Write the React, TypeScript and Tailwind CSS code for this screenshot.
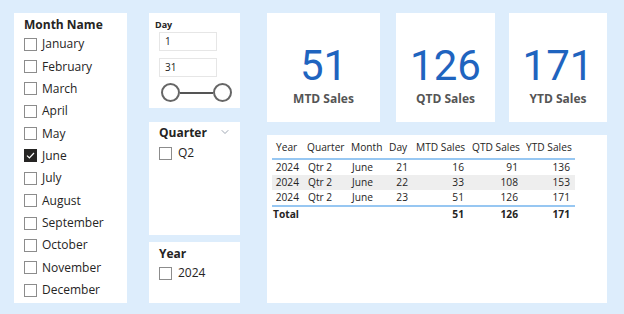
import React from 'react';
import { ChevronDown } from 'lucide-react';

const months = [
    'January', 'February', 'March', 'April', 'May', 'June',
    'July', 'August', 'September', 'October', 'November', 'December',
];

const rows = [
    { year: 2024, quarter: 'Qtr 2', month: 'June', day: 21, mtd: 16, qtd: 91, ytd: 136 },
    { year: 2024, quarter: 'Qtr 2', month: 'June', day: 22, mtd: 33, qtd: 108, ytd: 153 },
    { year: 2024, quarter: 'Qtr 2', month: 'June', day: 23, mtd: 51, qtd: 126, ytd: 171 },
];

const cols = 'grid grid-cols-[31px_44px_39px_26px_56px_54px_53px]';

function Box({ checked = false }: { checked?: boolean }) {
    if (checked) {
        return (
            <span className="flex h-[13px] w-[13px] shrink-0 items-center justify-center bg-[#252423]">
                <svg width="9" height="7" viewBox="0 0 9 7" fill="none">
                    <path d="M1 3.6 3.4 6 8 1" stroke="#fff" strokeWidth="1.2" />
                </svg>
            </span>
        );
    }
    return <span className="h-[13px] w-[13px] shrink-0 border border-[#8c8c8c] bg-white" />;
}

function Card({ value, label, width }: { value: number; label: string; width: string }) {
    return (
        <div className={`${width} flex h-full flex-col items-center bg-white pt-[29px]`}>
            <div className="font-['Roboto',sans-serif] text-[42px] leading-[48px] text-[#1f64bf]">{value}</div>
            <div className="mt-[1px] text-[12px] font-bold leading-[16px] text-[#555555]">{label}</div>
        </div>
    );
}

export default function App() {
    return (
        <div className="flex h-[314px] w-[624px] bg-[#ddedfc] pl-[14px] pt-[13px] font-['Open_Sans',sans-serif] text-[#252423]">
            {/* month slicer */}
            <div className="flex h-[290px] w-[113px] flex-col bg-white pl-[10px] pt-[4px]">
                <div className="text-[12px] font-bold leading-[16px]">Month Name</div>
                <div className="flex flex-col">
                    {months.map((m) => (
                        <div key={m} className="flex h-[22.36px] items-center gap-[5px] text-[12px]">
                            <Box checked={m === 'June'} />
                            <span>{m}</span>
                        </div>
                    ))}
                </div>
            </div>

            {/* middle slicers */}
            <div className="ml-[22px] flex w-[91px] flex-col">
                <div className="flex h-[95px] flex-col bg-white pl-[6px] pt-[6px]">
                    <div className="text-[9px] font-bold leading-[12px]">Day</div>
                    <div className="ml-[4px] mt-[1px] flex h-[19px] w-[58px] items-center border border-[#e6e6e6] pl-[5px] text-[10px]">1</div>
                    <div className="ml-[4px] mt-[7px] flex h-[19px] w-[58px] items-center border border-[#e6e6e6] pl-[5px] text-[10px]">31</div>
                    <div className="ml-[6px] mt-[6px] flex items-center">
                        <span className="h-[19px] w-[19px] rounded-full border-2 border-[#666666] bg-white" />
                        <span className="h-[2px] w-[33px] bg-[#555555]" />
                        <span className="h-[19px] w-[19px] rounded-full border-2 border-[#666666] bg-white" />
                    </div>
                </div>

                <div className="relative mt-[14px] flex h-[113px] flex-col bg-white pl-[10px] pt-[3px]">
                    <div className="text-[12px] font-bold leading-[16px]">Quarter</div>
                    <ChevronDown className="absolute right-[9px] top-[4px] text-[#7f8a99]" size={12} strokeWidth={1.5} />
                    <div className="mt-[3px] flex items-center gap-[6px] text-[12px]">
                        <Box />
                        <span>Q2</span>
                    </div>
                </div>

                <div className="mt-[7px] flex h-[61px] flex-col bg-white pl-[10px] pt-[4px]">
                    <div className="text-[12px] font-bold leading-[16px]">Year</div>
                    <div className="mt-[2px] flex items-center gap-[6px] text-[12px]">
                        <Box />
                        <span>2024</span>
                    </div>
                </div>
            </div>

            {/* cards and table */}
            <div className="ml-[27px] flex w-[340px] flex-col">
                <div className="flex h-[109px]">
                    <Card value={51} label="MTD Sales" width="w-[113px]" />
                    <div className="ml-[16px] flex h-full">
                        <Card value={126} label="QTD Sales" width="w-[99px]" />
                    </div>
                    <div className="ml-[14px] flex h-full">
                        <Card value={171} label="YTD Sales" width="w-[98px]" />
                    </div>
                </div>

                <div className="mt-[13px] h-[168px] bg-white pl-[5px] pt-[2px] text-[10.2px] text-[#252423]">
                    <div className="w-[303px]">
                        <div className={`${cols} h-[23px] items-center border-b-2 border-[#97c7f2]`}>
                            <span className="pl-[4px]">Year</span>
                            <span className="pl-[4px]">Quarter</span>
                            <span className="pl-[4px]">Month</span>
                            <span className="pl-[3px]">Day</span>
                            <span className="pl-[4px]">MTD Sales</span>
                            <span className="pl-[4px]">QTD Sales</span>
                            <span className="pl-[4px]">YTD Sales</span>
                        </div>
                        {rows.map((r, i) => (
                            <div key={r.day} className={`${cols} h-[15px] items-center ${i === 1 ? 'bg-[#eeeeee]' : ''}`}>
                                <span className="pr-[4px] text-right">{r.year}</span>
                                <span className="pl-[5px]">{r.quarter}</span>
                                <span className="pl-[5px]">{r.month}</span>
                                <span className="pr-[4px] text-right">{r.day}</span>
                                <span className="pr-[4px] text-right">{r.mtd}</span>
                                <span className="pr-[4px] text-right">{r.qtd}</span>
                                <span className="pr-[5px] text-right">{r.ytd}</span>
                            </div>
                        ))}
                        <div className={`${cols} h-[17px] items-center border-t-2 border-[#97c7f2] font-bold`}>
                            <span className="pl-[1px]">Total</span>
                            <span />
                            <span />
                            <span />
                            <span className="pr-[4px] text-right">51</span>
                            <span className="pr-[4px] text-right">126</span>
                            <span className="pr-[5px] text-right">171</span>
                        </div>
                    </div>
                </div>
            </div>
        </div>
    );
}
